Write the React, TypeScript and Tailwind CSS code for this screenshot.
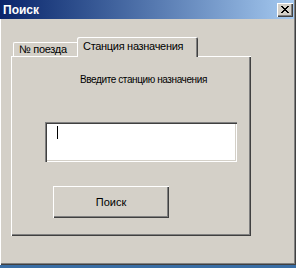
const raised =
  "shadow-[inset_1px_1px_#ffffff,inset_-1px_-1px_#404040,inset_-2px_-2px_#808080]";

function CloseGlyph() {
  const rows = [
    "xx....xx",
    ".xx..xx.",
    "..xxxx..",
    "...xx...",
    "..xxxx..",
    ".xx..xx.",
    "xx....xx",
  ];
  return (
    <svg width="8" height="7" viewBox="0 0 8 7" shapeRendering="crispEdges">
      {rows.flatMap((row, y) =>
        row.split("").map((c, x) =>
          c === "x" ? <rect key={`${x}-${y}`} x={x} y={y} width="1" height="1" fill="#000" /> : null,
        ),
      )}
    </svg>
  );
}

export default function App() {
  return (
    <div className="h-[268px] w-[296px] bg-[#3a6ea5] font-['Liberation_Sans',Arial,sans-serif] text-[11px] text-black">
      <div className="flex h-[265px] flex-col bg-[#d4d0c8] shadow-[inset_-1px_-1px_#404040,inset_-2px_-2px_#808080]">
        {/* title bar */}
        <div className="mr-[2px] flex h-[19px] items-center justify-between bg-linear-to-r from-[#0a246a] to-[#a6caf0] pr-[1px] pl-[3px]">
          <span className="text-[12px] font-bold text-white">Поиск</span>
          <button
            type="button"
            aria-label="Закрыть"
            className={`flex h-[14px] w-[16px] items-start justify-start bg-[#d4d0c8] pt-[3px] pl-[4px] ${raised}`}
          >
            <CloseGlyph />
          </button>
        </div>

        {/* body */}
        <div className="flex-1 border-l border-white pt-[18px] pl-[10px]">
          <div className="flex items-end pl-[2px] tracking-[-0.3px]">
            <div className="h-[14px] w-[64px] rounded-tl-[2px] border-t border-l border-white pl-[5px] leading-[12px]">
              № поезда
            </div>
            <div className="relative z-10 -mb-px h-[20px] w-[121px] rounded-t-[2px] bg-[#d4d0c8] pt-[3px] pl-[6px] leading-[13px] shadow-[inset_1px_1px_#ffffff,inset_-1px_0_#404040,inset_-2px_0_#808080]">
              Станция назначения
            </div>
          </div>

          <div className="flex h-[180px] w-[240px] flex-col shadow-[inset_1px_1px_#ffffff,inset_-1px_-1px_#404040,inset_-2px_-2px_#808080]">
            <p className="pt-[18px] pl-[69px] text-[10px] leading-[12px] tracking-[-0.4px]">
              Введите станцию назначения
            </p>

            <div className="mt-[36px] ml-[34px] flex h-[40px] w-[192px] bg-white pt-[4px] pl-[12px] shadow-[inset_1px_1px_#808080,inset_2px_2px_#404040,inset_-1px_-1px_#ffffff,inset_-2px_-2px_#d4d0c8]">
              <span className="h-[13px] w-px bg-black" />
            </div>

            <button
              type="button"
              className={`mt-[24px] ml-[42px] h-[32px] w-[116px] bg-[#d4d0c8] ${raised}`}
            >
              Поиск
            </button>
          </div>
        </div>
      </div>
    </div>
  );
}
